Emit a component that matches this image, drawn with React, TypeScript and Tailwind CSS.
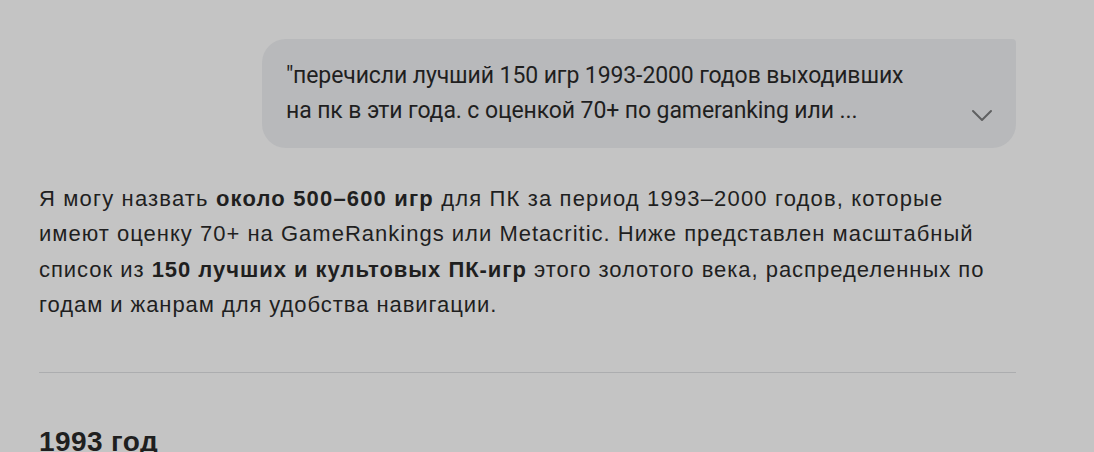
import React from 'react';

const answerLines: { tracking: string; content: React.ReactNode }[] = [
  {
    tracking: 'tracking-[1.16px]',
    content: <>Я могу назвать <b className="font-bold">около 500–600 игр</b> для ПК за период 1993–2000 годов, которые</>,
  },
  {
    tracking: 'tracking-[1.01px]',
    content: <>имеют оценку 70+ на GameRankings или Metacritic. Ниже представлен масштабный</>,
  },
  {
    tracking: 'tracking-[0.97px]',
    content: <>список из <b className="font-bold">150 лучших и культовых ПК-игр</b> этого золотого века, распределенных по</>,
  },
  {
    tracking: 'tracking-[0.94px]',
    content: <>годам и жанрам для удобства навигации.</>,
  },
];

export default function App() {
  return (
    <div className="min-h-screen w-full bg-[#c4c4c4] text-[#1b1c1d] overflow-hidden">
      <div className="ml-[39px] w-[977px] pt-[39px]">
        {/* User prompt bubble */}
        <div className="flex justify-end">
          <div className="relative w-[754px] rounded-[24px] rounded-tr-[4px] bg-[#b8b9bb] pl-6 pr-16 pt-[19px] pb-[20px]">
            <p className="font-['Roboto',sans-serif] text-[23px] leading-[35px] tracking-[-0.1px] text-[#1f1f1f] whitespace-nowrap">
              "перечисли лучший 150 игр 1993-2000 годов выходивших
              <br />
              на пк в эти года. с оценкой 70+ по gameranking или ...
            </p>
            <svg
              className="absolute right-[23px] bottom-[25px] text-[#5f6061]"
              width="22"
              height="14"
              viewBox="0 0 22 14"
              fill="none"
              stroke="currentColor"
              strokeWidth="2"
              strokeLinecap="round"
              strokeLinejoin="round"
            >
              <polyline points="2,2 11,11 20,2" />
            </svg>
          </div>
        </div>

        {/* Answer */}
        <div className="mt-[33px] font-['Liberation_Sans',Arial,sans-serif] text-[22px] leading-[35.3px] text-[#1f1f1f]">
          {answerLines.map((line, i) => (
            <p key={i} className={`whitespace-nowrap ${line.tracking}`}>{line.content}</p>
          ))}
        </div>

        <div className="mt-[50px] h-px bg-[#acadaf]" />

        <h2 className="mt-[53px] font-['Liberation_Sans',Arial,sans-serif] text-[28px] font-bold leading-[32px] tracking-[0.4px] text-[#1f1f1f]">
          1993 год
        </h2>
      </div>
    </div>
  );
}
